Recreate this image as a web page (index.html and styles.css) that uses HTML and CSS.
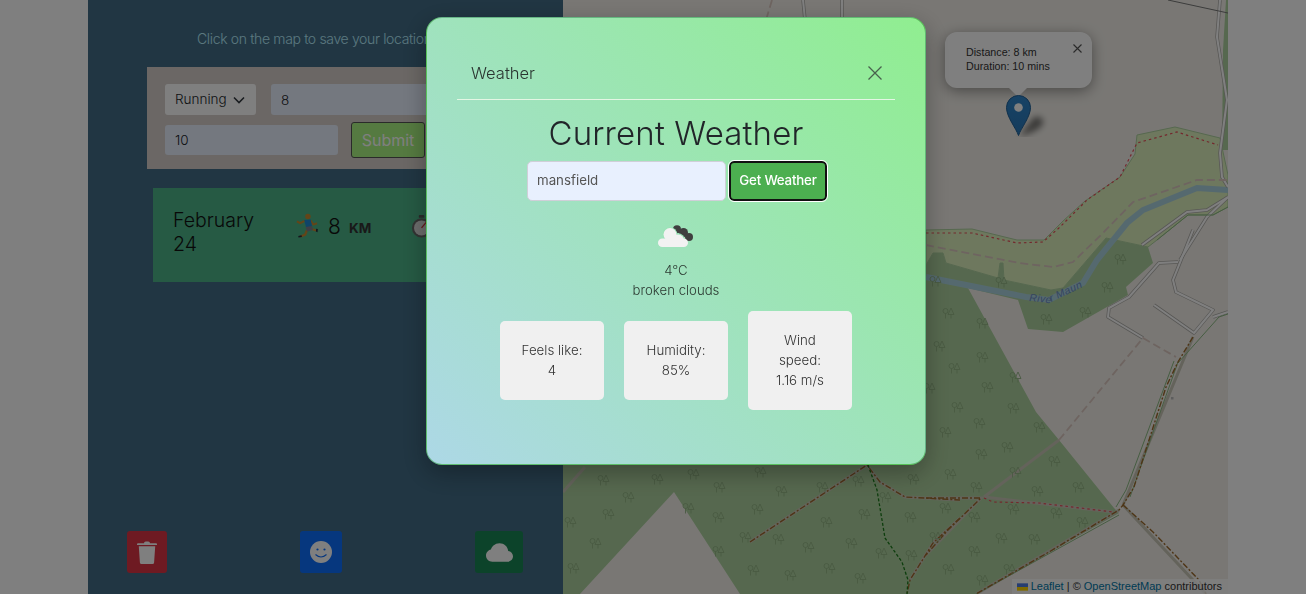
FILE: index.html
```html
<!DOCTYPE html>
<html lang="en">
<head>
<meta charset="utf-8">
<title>Workout tracker</title>
<link rel="stylesheet" href="styles.css">
</head>
<body>
<div class="app">
  <aside class="sidebar">
    <p class="hint">Click on the map to save your location</p>
    <form class="entry">
      <div class="fake-select">Running
        <svg class="chev" viewBox="0 0 12 8" width="12" height="8"><path d="M1 1.500l5 5 5-5" fill="none" stroke="#343a40" stroke-width="1.600"/></svg>
      </div>
      <div class="field field-wide">8</div>
      <div class="field field-mid">10</div>
      <div class="submit">Submit</div>
    </form>
    <article class="workout">
      <h3 class="date">February 24</h3>
      <svg class="emoji" viewBox="0 0 24 26" width="22" height="25">
        <path d="M9.500 8L4.500 10.500 1 8.500M16 7.500L19 12 23 10.500" fill="none" stroke="#c68a30" stroke-width="2.200" stroke-linejoin="round"/>
        <path d="M12 18L10 23 5 25" fill="none" stroke="#c68a30" stroke-width="2.600" stroke-linejoin="round"/>
        <path d="M16.500 16.500L22 18.500" stroke="#c68a30" stroke-width="2.400"/>
        <circle cx="13" cy="3.300" r="3" fill="#c68a30"/>
        <path d="M9 7l7-.5 1.500 7.500-6.500 1z" fill="#1e88d0"/>
        <path d="M10.500 14.500l7-1 1 4.500-6.500 1.500z" fill="#7c7c8c"/>
        <path d="M2.500 24.500l3.500-1 .5 2-3.800 .5zM22 16.500l1.800 .3-.3 3.500-1.800-.8z" fill="#2a2a3a"/>
      </svg>
      <span class="value">8</span>
      <span class="unit">KM</span>
      <svg class="emoji watch" viewBox="0 0 24 26" width="22" height="24">
        <rect x="8.500" y="0" width="6" height="3" rx="1" fill="#555"/>
        <circle cx="11.500" cy="14" r="10.500" fill="#666"/>
        <circle cx="11.500" cy="14" r="8.200" fill="#d8d8d8"/>
        <path d="M11.500 14l5-6" stroke="#c83030" stroke-width="1.400"/>
      </svg>
    </article>
    <div class="actions">
      <button class="act act-red" type="button">
        <svg viewBox="0 0 20 23" width="20" height="23"><path d="M7 2.300Q7 .5 8.800.5h2.400Q13 .5 13 2.300H19q1 0 1 1v.7H0v-.7q0-1 1-1z" fill="#fff"/><path d="M1.800 5.200h16.400l-1.100 16.300q-.1 1.500-1.600 1.500H4.500q-1.500 0-1.600-1.500z" fill="#fff"/></svg>
      </button>
      <button class="act act-blue" type="button">
        <svg viewBox="0 0 22 22" width="22" height="22"><circle cx="11" cy="11" r="11" fill="#fff"/><circle cx="7.500" cy="8.500" r="1.100" fill="#0d6efd"/><circle cx="14.500" cy="8.500" r="1.100" fill="#0d6efd"/><path d="M5.500 13.500q5.500 5 11 0" fill="none" stroke="#0d6efd" stroke-width="1.100"/></svg>
      </button>
      <button class="act act-green" type="button">
        <svg viewBox="0 0 16 11" width="27" height="19"><path d="M4.406 1.342A5.530 5.530 0 0 1 8 0c2.690 0 4.923 2 5.166 4.579C14.758 4.804 16 6.137 16 7.773 16 9.569 14.502 11 12.687 11H3.781C1.708 11 0 9.366 0 7.318c0-1.763 1.266-3.223 2.942-3.593.143-.863.698-1.723 1.464-2.383z" fill="#fff"/></svg>
      </button>
    </div>
  </aside>

  <main class="map">
    <svg class="tiles" viewBox="563 0 665 594" width="665" height="594">
      <defs>
        <g id="t" fill="none" stroke="#93b485" stroke-width=".9">
          <circle cx="-2.500" cy="-2" r="2.500"/><path d="M-2.500 .5V5.500"/>
          <path d="M3 -5L6 1.500H0zM3 1.500V5.500"/>
        </g>
      </defs>
      <rect x="563" y="0" width="665" height="594" fill="#f2efe9"/>
      <!-- woodland -->
      <path d="M563 440H860L926 265 933 253 943 253 946 263 998 278 1000 263 1003 263 1004 280 1051 290 1063 288 1106 238 1148 247 1153 263 1126 287 1128 295 1063 332 1028 329 1018 300 968 288 1036 412 1059 440 1114 508 1119 513 976 594H740L674 492 580 594H563Z" fill="#add19e"/>
      <path d="M1222 150L1228 150V0H1226L1223 50Z" fill="#add19e"/>
      <!-- meadow -->
      <path d="M926 230L972 229 1017 240 1044 240 1063 221 1085 201 1120 177 1135 154 1137 135 1175 127 1220 138 1228 175V207L1213 215 1188 215 1157 240 1148 247 1106 238 1063 288 1051 290 1004 280 1003 263 1000 263 998 278 946 263 943 253 933 253 926 265Z" fill="#dcf0bd" stroke="#add19e"/>
      <!-- river -->
      <path id="river" d="M926 277L1026 297 1049 300 1083 283 1097 260 1127 223 1143 210 1197 188 1228 190" fill="none" stroke="#aad3df" stroke-width="6"/>
      <path id="rlabel" d="M1029 301L1049 303 1083 287 1090 274" fill="none"/>
      <text class="river-name"><textPath href="#rlabel">River Maun</textPath></text>
      <!-- roads -->
      <g fill="none" stroke="#b0aeaa" stroke-width="3.500" stroke-linejoin="round">
        <path d="M1142 245L1187 212 1207 210 1228 197"/>
        <path d="M1180 260L1207 217 1228 197"/>
        <path d="M1193 230L1173 280 1176 292 1213 310 1194 333 1154 305"/>
        <path d="M1178 262L1159 263 1129 297 1109 308 1108 317 1143 338"/>
        <path d="M1213 317L1228 312"/>
        <path d="M1220 0L1217 37 1227 100 1220 153 1222 177 1228 187"/>
        <path d="M803 0L805 20 809 22"/>
        <path d="M842 0V22"/>
      </g>
      <g fill="none" stroke="#fff" stroke-width="2" stroke-linejoin="round">
        <path d="M1142 245L1187 212 1207 210 1228 197"/>
        <path d="M1180 260L1207 217 1228 197"/>
        <path d="M1193 230L1173 280 1176 292 1213 310 1194 333 1154 305"/>
        <path d="M1178 262L1159 263 1129 297 1109 308 1108 317 1143 338"/>
        <path d="M1213 317L1228 312"/>
        <path d="M1220 0L1217 37 1227 100 1220 153 1222 177 1228 187"/>
        <path d="M803 0L805 20 809 22"/>
        <path d="M842 0V22"/>
      </g>
      <path d="M1168 0L1228 13" stroke="#777" stroke-width="1"/>
      <!-- pale tracks -->
      <g fill="none" stroke="#c8c6b6" stroke-width="3">
        <path d="M984 497L1059 440"/>
        <path d="M563 492L585 467"/>
        <path d="M984 497L1113 512M1119 510L976 594M1123 505L1193 337M1123 505L1206 594M926 498H981L926 555M750 542L867 465 880 482 905 497 960 500M960 518L933 543 910 580"/>
      </g>
      <!-- green verges -->
      <g fill="none" stroke="#8dbb83" stroke-width="1">
        <path d="M1174 361L1126 490 1116 507"/>
        <path d="M1178 362L1130 497"/>
        <path d="M1178 363L1219 317 1228 314"/>
        <path d="M1119 515L976 594"/>
        <path d="M1157 240L1188 215 1213 215 1228 207"/>
      </g>
      <!-- brown dashed -->
      <g fill="none" stroke="#9c6a2c" stroke-width="1.400" stroke-dasharray="6 2 2 2">
        <path d="M1193 337L1178 362 1166 387 1134 487 1123 505 1119 510 1049 552 976 594"/>
        <path d="M1123 505L1153 532 1199 580 1206 594"/>
        <path d="M926 498H981L948 530 926 555"/>
        <path d="M750 542L867 465 880 482 905 497 960 500"/>
        <path d="M960 518L933 543 910 580 907 594"/>
      </g>
      <path d="M868 465L877 490 885 538 902 562 908 580 907 594" fill="none" stroke="#1a7a1a" stroke-width="1.300" stroke-dasharray="3 2"/>
      <!-- red dotted -->
      <g fill="none" stroke="#e8505a" stroke-width="1.200" stroke-dasharray="2.500 3">
        <path d="M926 233L972 233 1017 243 1043 242 1060 227 1087 200 1120 177 1137 143 1177 132 1218 145"/>
        <path d="M984 498L993 502 1039 503 1113 512"/>
      </g>
      <!-- pale dashes -->
      <g fill="none" stroke="#dcc8c0" stroke-width="1.800" stroke-dasharray="8 4">
        <path d="M926 245L1019 263 1053 267 1073 262 1103 233 1133 202 1197 180 1227 180"/>
        <path d="M1059 440L1143 338 1176 357"/>
        <path d="M772 0L766 20"/>
      </g>
      <rect x="1171" y="397" width="2.500" height="2.500" fill="#bbb"/>
      <!-- trees -->
      <use href="#t" x="603" y="480"/><use href="#t" x="657" y="479"/><use href="#t" x="693" y="474"/><use href="#t" x="628" y="497"/><use href="#t" x="608" y="514"/><use href="#t" x="570" y="522"/><use href="#t" x="595" y="543"/><use href="#t" x="573" y="568"/><use href="#t" x="719" y="487"/><use href="#t" x="688" y="508"/><use href="#t" x="718" y="517"/><use href="#t" x="757" y="509"/><use href="#t" x="718" y="551"/><use href="#t" x="753" y="570"/><use href="#t" x="790" y="575"/><use href="#t" x="745" y="537"/><use href="#t" x="778" y="539"/><use href="#t" x="808" y="547"/><use href="#t" x="851" y="543"/><use href="#t" x="829" y="568"/><use href="#t" x="860" y="578"/><use href="#t" x="826" y="522"/><use href="#t" x="864" y="514"/><use href="#t" x="822" y="487"/><use href="#t" x="858" y="481"/><use href="#t" x="760" y="472"/><use href="#t" x="781" y="491"/><use href="#t" x="885" y="497"/><use href="#t" x="910" y="517"/><use href="#t" x="945" y="508"/><use href="#t" x="913" y="479"/><use href="#t" x="950" y="474"/><use href="#t" x="881" y="553"/><use href="#t" x="911" y="555"/><use href="#t" x="948" y="569"/><use href="#t" x="935" y="537"/>
      <use href="#t" x="935" y="281"/><use href="#t" x="948" y="313"/><use href="#t" x="982" y="323"/><use href="#t" x="939" y="346"/><use href="#t" x="982" y="357"/><use href="#t" x="954" y="368"/><use href="#t" x="987" y="387"/><use href="#t" x="957" y="407"/><use href="#t" x="1013" y="408"/><use href="#t" x="979" y="423"/><use href="#t" x="945" y="432"/><use href="#t" x="1039" y="427"/><use href="#t" x="1007" y="447"/><use href="#t" x="981" y="454"/><use href="#t" x="1054" y="461"/><use href="#t" x="1015" y="472"/><use href="#t" x="1037" y="491"/><use href="#t" x="976" y="487"/><use href="#t" x="1078" y="487"/><use href="#t" x="1013" y="509"/><use href="#t" x="1056" y="513"/><use href="#t" x="974" y="517"/><use href="#t" x="1082" y="522"/><use href="#t" x="1001" y="538"/><use href="#t" x="1034" y="539"/><use href="#t" x="974" y="551"/><use href="#t" x="1009" y="569"/><use href="#t" x="982" y="580"/><use href="#t" x="1046" y="319"/><use href="#t" x="1085" y="312"/><use href="#t" x="1107" y="287"/><use href="#t" x="1120" y="259"/><use href="#t" x="1001" y="282"/><use href="#t" x="1015" y="377"/><use href="#t" x="929" y="388"/>
    </svg>

    <div class="popup">
      <svg class="popup-close" viewBox="0 0 9 9" width="9" height="9"><path d="M.5.500l8 8M8.500.500l-8 8" stroke="#555" stroke-width="1.100" fill="none"/></svg>
      <div>Distance: 8 km</div>
      <div>Duration: 10 mins</div>
      <span class="popup-tip"></span>
    </div>
    <svg class="pin" viewBox="0 0 50 42" width="50" height="42">
      <defs>
        <linearGradient id="pinfill" x1="0" y1="0" x2="0" y2="1"><stop offset="0" stop-color="#2e85cb"/><stop offset="1" stop-color="#2a78b8"/></linearGradient>
        <filter id="blur" x="-50%" y="-50%" width="200%" height="200%"><feGaussianBlur stdDeviation="3"/></filter>
      </defs>
      <path d="M14 40L28 22Q38 20 37 29Q32 37 14 41Z" fill="#000" opacity=".5" filter="url(#blur)"/>
      <path d="M12.500 40.500C10 33 .5 22 .5 12.500A12 12 0 0 1 24.500 12.500C24.500 22 15 33 12.500 40.500Z" fill="url(#pinfill)" stroke="#1f5f96"/>
      <circle cx="12.500" cy="12.500" r="4.300" fill="#fff"/>
    </svg>
    <div class="attribution">
      <svg class="flag" viewBox="0 0 12 8" width="11" height="8"><rect width="12" height="4" fill="#4C7BE1"/><rect y="4" width="12" height="4" fill="#FFD500"/></svg>
      <a class="attr-link">Leaflet</a> <span class="attr-sep">|</span> © <a class="attr-link">OpenStreetMap</a> contributors
    </div>
  </main>
</div>

<div class="backdrop">
  <section class="modal">
    <header class="modal-head">
      <span class="modal-title">Weather</span>
      <svg class="modal-close" viewBox="0 0 14 14" width="14" height="14"><path d="M.5.500l13 13M13.500.500l-13 13" stroke="#3c4a40" stroke-width="1.300" fill="none"/></svg>
    </header>
    <div class="modal-body">
      <h2 class="heading">Current Weather</h2>
      <div class="search">
        <div class="city">mansfield</div>
        <div class="get">Get Weather</div>
      </div>
      <svg class="sky" viewBox="0 0 36 23" width="36" height="23">
        <g fill="#3f3f3f"><circle cx="19" cy="4.200" r="4"/><circle cx="25.500" cy="7.500" r="4.500"/><circle cx="31" cy="12" r="4"/></g>
        <g fill="#9be2b6"><circle cx="12" cy="9.500" r="7.300"/><circle cx="20" cy="15" r="6.800"/></g>
        <g fill="#f2f2f2"><circle cx="12" cy="9.500" r="6.500"/><circle cx="20" cy="15.500" r="6"/><rect x="0" y="13.500" width="30" height="8.500" rx="4.200"/></g>
      </svg>
      <div class="temp">4°C</div>
      <div class="desc">broken clouds</div>
      <div class="cards">
        <div class="card">Feels like:<br>4</div>
        <div class="card">Humidity:<br>85%</div>
        <div class="card">Wind speed:<br>1.16 m/s</div>
      </div>
    </div>
  </section>
</div>
</body>
</html>
```

FILE: styles.css
```css
* { box-sizing: border-box; }
html, body { margin: 0; height: 100%; }
body {
  background: #fff;
  color: #212529;
  font-family: Inter, "Noto Sans", sans-serif;
  font-weight: 300;
  overflow: hidden;
}
.app {
  display: flex;
  height: 594px;
  padding: 0 78px 0 88px;
}
.sidebar {
  width: 475px;
  flex: none;
  background: #426c86;
  display: flex;
  flex-direction: column;
  align-items: flex-start;
  padding: 29px 0 0 59px;
}
.hint {
  margin: 0 0 0 50px;
  width: 256px;
  white-space: nowrap;
  font-size: 14px;
  line-height: 19px;
  letter-spacing: -.35px;
  color: #b8f0ff;
}
.entry {
  margin-top: 19px;
  width: 356px;
  height: 102px;
  background: #d6cfca;
  padding: 17px 18px;
  display: grid;
  grid-template-columns: 91px 15px 67px 13px 74px 1fr;
  grid-template-rows: 31px 30px;
  row-gap: 10px;
  align-items: center;
}
.fake-select {
  grid-column: 1;
  height: 31px;
  background: #fff;
  border-radius: 3px;
  font-size: 13.500px;
  line-height: 31px;
  padding-left: 10px;
  display: flex;
  align-items: center;
  gap: 6px;
}
.field {
  height: 100%;
  background: #e8f0fe;
  border-radius: 3px;
  font-size: 13.500px;
  padding-left: 10px;
  display: flex;
  align-items: center;
}
.field-wide { grid-column: 3 / -1; }
.field-mid { grid-row: 2; grid-column: 1 / 4; }
.submit {
  grid-row: 2;
  grid-column: 5;
  height: 36px;
  background: #aaf482;
  border: 1px solid #555;
  border-radius: 3px;
  color: #fff;
  font-size: 16px;
  font-weight: 400;
  display: flex;
  align-items: center;
  justify-content: center;
}
.workout {
  margin: 19px 0 0 6px;
  width: 344px;
  height: 94px;
  background: #4cb488;
  display: flex;
  align-items: flex-start;
  padding: 20px 20px 0;
  color: #111;
}
.date {
  margin: 0;
  width: 100px;
  font-size: 19.500px;
  line-height: 24px;
  font-weight: 300;
}
.emoji { flex: none; margin: 5px 0 0 23px; }
.value { font-size: 21px; line-height: 38px; margin-left: 10px; width: 21px; }
.unit { font-size: 13.500px; line-height: 41px; font-weight: 700; color: #333; width: 62px; }
.watch { margin-left: 0; margin-top: 7px; }
.actions {
  margin: auto 0 21px -20px;
  width: 396px;
  display: flex;
  justify-content: space-between;
  align-items: center;
}
.act {
  height: 42px;
  border: 0;
  border-radius: 3px;
  padding: 0;
  display: flex;
  align-items: center;
  justify-content: center;
}
.act-red { width: 40px; background: #dc3545; }
.act-blue { width: 42px; background: #0d6efd; }
.act-green { width: 48px; background: #198754; }

.map { flex: 1; position: relative; overflow: hidden; }
.tiles { display: block; }
.river-name {
  font-family: "Liberation Sans", sans-serif;
  font-style: italic;
  font-size: 10.500px;
  font-weight: 400;
  fill: #6a8cc0;
  letter-spacing: .4px;
}
.popup {
  position: absolute;
  left: 382px;
  top: 32px;
  width: 147px;
  height: 56px;
  background: #fff;
  border-radius: 12px;
  box-shadow: 0 3px 14px rgba(0, 0, 0, .4);
  padding: 13px 0 0 21px;
  font-family: "Liberation Sans", sans-serif;
  font-weight: 400;
  font-size: 10.700px;
  line-height: 14px;
  color: #333;
}
.popup-close { position: absolute; right: 10px; top: 12px; }
.popup-tip {
  position: absolute;
  left: 63px;
  bottom: -9px;
  width: 0;
  height: 0;
  border-left: 10px solid transparent;
  border-right: 10px solid transparent;
  border-top: 10px solid #fff;
}
.pin { position: absolute; left: 443px; top: 95px; }
.attribution {
  position: absolute;
  right: 0;
  bottom: 0;
  height: 15px;
  padding: 0 6px 0 5px;
  background: rgba(255, 255, 255, .8);
  font-family: "Liberation Sans", sans-serif;
  font-weight: 400;
  font-size: 11px;
  line-height: 15px;
  color: #333;
  white-space: nowrap;
}
.flag { vertical-align: -0.500px; }
.attr-link { color: #0078a8; }

.backdrop {
  position: fixed;
  inset: 0;
  background-color: rgba(0, 0, 0, .5);
  padding: 17px 0 0 426px;
}
.modal {
  width: 500px;
  height: 448px;
  background: linear-gradient(45deg, #add8e6, #90ee90);
  border: 1px solid rgba(0, 128, 0, .4);
  border-radius: 16px;
  box-shadow: 0 8px 24px rgba(0, 0, 0, .3);
  padding: 0 30px;
}
.modal-head {
  height: 82px;
  border-bottom: 1px solid #e4f6e4;
  padding: 28px 13px 0 14px;
  display: flex;
  justify-content: space-between;
  align-items: center;
}
.modal-title { font-size: 16.500px; color: #2a3430; }
.modal-close { opacity: .85; }
.modal-body {
  display: flex;
  flex-direction: column;
  align-items: center;
  padding-top: 14px;
}
.heading {
  margin: 0;
  font-size: 33px;
  line-height: 38px;
  font-weight: 300;
  letter-spacing: .15px;
}
.search { margin: 9px 0 0 2px; display: flex; gap: 3px; }
.city {
  width: 199px;
  height: 40px;
  background: #e8f0fe;
  border: 1px solid #cfcfd8;
  border-radius: 5px;
  padding: 0 0 2px 9px;
  font-size: 13.300px;
  font-weight: 400;
  color: #555;
  display: flex;
  align-items: center;
}
.get {
  width: 98px;
  height: 40px;
  background: #4caf50;
  border: 2px solid #111;
  outline: 1px solid #fff;
  border-radius: 5px;
  padding-bottom: 2px;
  color: #fff;
  font-size: 13.300px;
  font-weight: 500;
  display: flex;
  align-items: center;
  justify-content: center;
  letter-spacing: -.2px;
}
.sky { margin-top: 24px; }
.temp, .desc { font-size: 13.200px; line-height: 20px; color: #2c3a32; }
.temp { margin-top: 12px; }
.cards {
  margin-top: 11px;
  display: flex;
  align-items: center;
  gap: 20px;
}
.card {
  width: 104px;
  padding: 18.500px 20px 20.500px;
  background: #f0f0f0;
  border-radius: 5px;
  text-align: center;
  font-size: 13.300px;
  line-height: 20px;
  color: #333;
}
```
